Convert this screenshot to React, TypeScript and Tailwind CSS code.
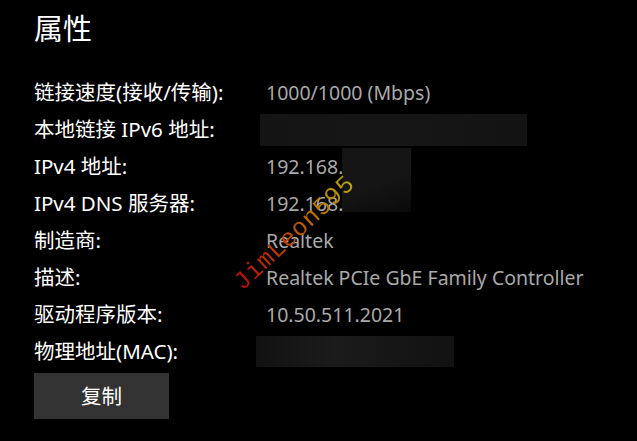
import React from "react";

const font = { fontFamily: '"Noto Sans", "Noto Sans CJK SC", sans-serif' };

function Row({ label, children }: { label: string; children?: React.ReactNode }) {
  return (
    <div className="flex h-[37px] items-center">
      <div className="w-[232px] shrink-0 text-[20.5px] text-white">{label}</div>
      <div className="relative flex items-center text-[19.5px] text-[#a9a9a9]">{children}</div>
    </div>
  );
}

export default function App() {
  return (
    <div className="relative h-[441px] w-[637px] overflow-hidden bg-black px-[34px] pt-[9px]" style={font}>
      <div className="h-[40px] text-[29px] leading-[40px] text-white">属性</div>
      <div className="mt-[25px]">
        <Row label="链接速度(接收/传输):">1000/1000 (Mbps)</Row>
        <Row label="本地链接 IPv6 地址:">
          <div className="ml-[-6px] h-[32px] w-[267px] bg-[linear-gradient(90deg,#141414,#161616_50%,#131313)]" />
        </Row>
        <Row label="IPv4 地址:">
          192.168.
          <div className="absolute left-[76px] top-[-4px] h-[64px] w-[69px] bg-[linear-gradient(160deg,#151515_55%,#0a0a0a)]" />
        </Row>
        <Row label="IPv4 DNS 服务器:">192.168.</Row>
        <Row label="制造商:">Realtek</Row>
        <Row label="描述:">Realtek PCIe GbE Family Controller</Row>
        <Row label="驱动程序版本:">10.50.511.2021</Row>
        <Row label="物理地址(MAC):">
          <div className="ml-[-10px] h-[31px] w-[198px] bg-[linear-gradient(90deg,#121212,#1b1b1b_40%,#161616_70%,#121212)]" />
        </Row>
      </div>
      <button className="mt-[3px] h-[46px] w-[135px] bg-[#333333] text-[20.5px] text-white" style={font}>
        复制
      </button>
      <div
        className="pointer-events-none absolute left-[203px] top-[219px] w-[184px] text-center font-['Liberation_Mono',monospace] text-[25px] leading-[30px] tracking-[0.5px] text-transparent bg-[linear-gradient(90deg,#b00000,#c03a00_40%,#b8b800)] bg-clip-text rotate-[-43deg]"
      >
        JimLeon595
      </div>
    </div>
  );
}
